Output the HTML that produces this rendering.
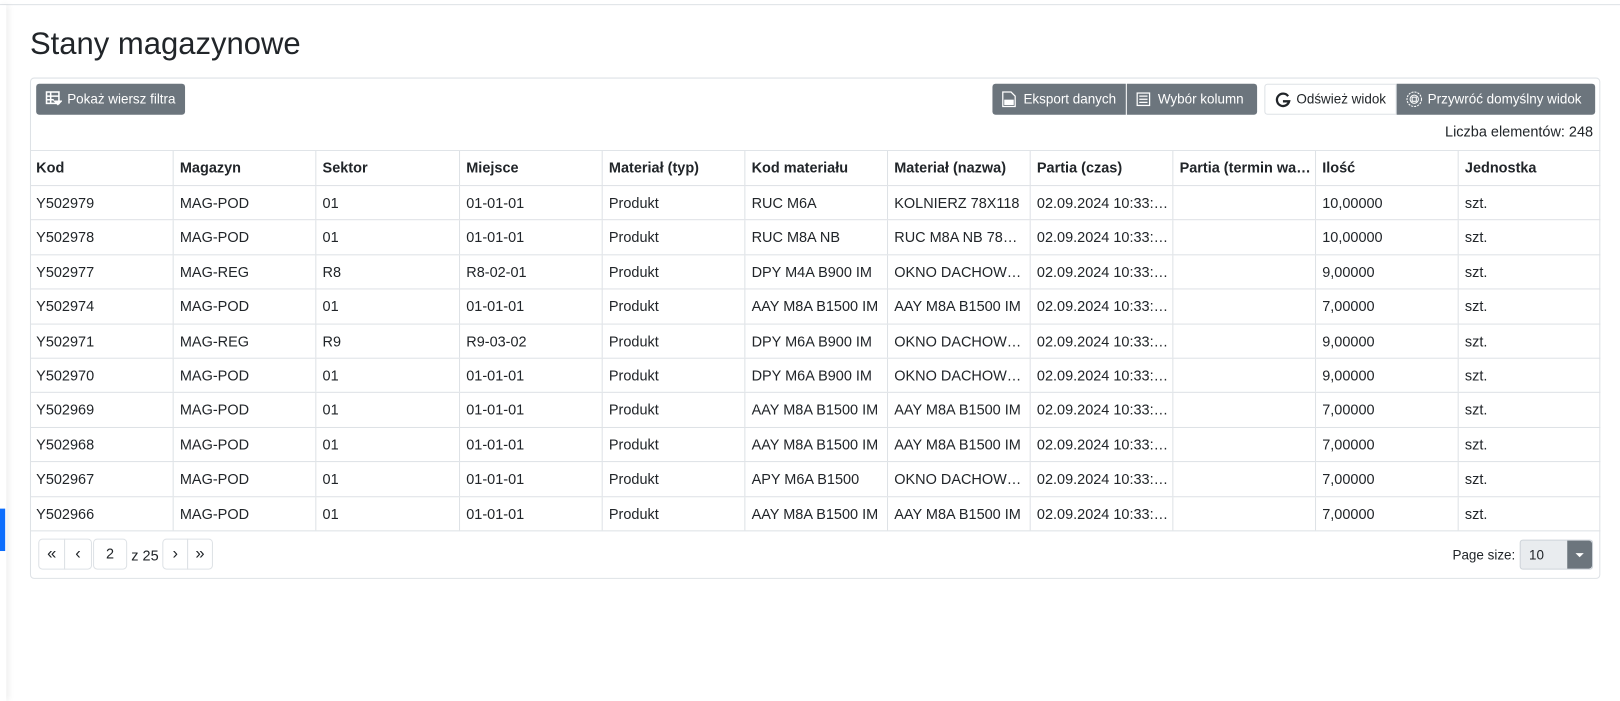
<!DOCTYPE html>
<html><head><meta charset="utf-8"><style>
*{box-sizing:border-box;margin:0;padding:0}
body{width:1620px;height:678px;background:#fff;font-family:"Liberation Sans",sans-serif;color:#212529;position:relative;overflow:hidden;font-size:14px}
#w{position:absolute;left:0;top:0;width:1567px;height:656px;transform:scale(1.0338);transform-origin:0 0}
.top{position:absolute;left:0;top:4px;width:1567px;height:1px;background:#dee2e6}
.side{position:absolute;left:0;top:5px;width:6px;height:673px;background:#fff;box-shadow:2px 0 6px rgba(0,0,0,.08)}
.blue{position:absolute;left:0;top:492px;width:5px;height:41px;background:#0d6efd}
h1{position:absolute;left:29px;top:26px;font-size:30px;font-weight:500}
.card{position:absolute;left:29px;top:75px;width:1519px;height:485px;border:1px solid #dee2e6;border-radius:4px}
.btn{position:absolute;height:30px;top:81px;background:#6c757d;color:#fff;font-size:13px;line-height:30px;padding-left:30px;white-space:nowrap}
.btn svg{position:absolute;left:9px;top:7px}
.cnt{position:absolute;right:26px;top:119px;font-size:14px}
.row{position:absolute;left:29px;width:1519px;border-top:1px solid #dee2e6}
.c{position:absolute;top:0;height:100%;border-left:1px solid #dee2e6;padding-left:6px;white-space:nowrap;overflow:hidden;text-overflow:ellipsis;padding-right:4px}
.hd .c{font-weight:bold}
.pg{position:absolute;top:521px;height:30px;border:1px solid #dee2e6;background:#fff;font-size:16px;text-align:center;line-height:27px}
</style></head><body><div id="w">
<div class="top"></div><div class="side"></div><div class="blue"></div>
<h1>Stany magazynowe</h1>
<div class="card"></div>
<div class="btn" style="left:35px;width:144px;border-radius:3px"><svg width="16" height="16" viewBox="0 0 16 16" fill="none" stroke="#fff" stroke-width="1.5"><rect x="1" y="1" width="12" height="11"/><path d="M1 5h12M1 8.5h7M5 1v11"/><path d="M9 10h6l-3 3z" fill="#fff"/></svg>Pokaż wiersz filtra</div>
<div class="btn" style="left:960px;width:129px;border-radius:3px 0 0 3px"><svg width="14" height="16" viewBox="0 0 14 16" fill="none" stroke="#fff" stroke-width="1.2"><path d="M1 1h8l4 4v10H1z"/><rect x="3" y="9" width="8" height="4" fill="#fff"/></svg>Eksport danych</div>
<div class="btn" style="left:1090px;width:126px;border-radius:0 3px 3px 0"><svg width="14" height="16" viewBox="0 0 14 16" fill="none" stroke="#fff" stroke-width="1.2"><rect x="1" y="2" width="12" height="12"/><path d="M3 5h8M3 8h8M3 11h8"/></svg>Wybór kolumn</div>
<div class="btn" style="left:1223px;width:128px;background:#fff;color:#212529;border:1px solid #dee2e6;border-radius:3px 0 0 3px;line-height:28px"><svg width="16" height="16" viewBox="0 0 16 16" fill="none" stroke="#212529" stroke-width="2.2"><path d="M13 4A6 6 0 1 0 14 9H8"/></svg>Odśwież widok</div>
<div class="btn" style="left:1351px;width:192px;border-radius:0 3px 3px 0"><svg width="16" height="16" viewBox="0 0 16 16" fill="none" stroke="#fff" stroke-width="1"><circle cx="8" cy="8" r="7" stroke-dasharray="2 1"/><circle cx="8" cy="8" r="4"/><rect x="6" y="6" width="4" height="4"/></svg>Przywróć domyślny widok</div>
<div class="cnt">Liczba elementów: 248</div>
<div id="t"></div>
<div class="pg" style="left:37px;width:26px;border-radius:4px 0 0 4px">«</div>
<div class="pg" style="left:62px;width:27px;border-radius:0 4px 4px 0">‹</div>
<div class="pg" style="left:90px;width:33px;border-radius:4px;font-size:14px">2</div>
<div style="position:absolute;left:127px;top:529px;font-size:14px">z 25</div>
<div class="pg" style="left:157px;width:25px;border-radius:4px 0 0 4px">›</div>
<div class="pg" style="left:181px;width:25px;border-radius:0 4px 4px 0">»</div>
<div style="position:absolute;left:1405px;top:529px;font-size:13px">Page size:</div>
<div style="position:absolute;left:1470px;top:522px;width:71px;height:29px;border:1px solid #ced4da;border-radius:3px;background:#e9ecef;font-size:13px;line-height:27px;padding-left:8px">10<div style="position:absolute;right:0;top:0;width:24px;height:27px;background:#6c757d;border-radius:0 3px 3px 0"><div style="position:absolute;left:8px;top:12px;border:4px solid transparent;border-top:4px solid #fff"></div></div></div>
</div>
<script>
var H=["Kod","Magazyn","Sektor","Miejsce","Materiał (typ)","Kod materiału","Materiał (nazwa)","Partia (czas)","Partia (termin ważności)","Ilość","Jednostka"];
var D=[["Y502979","MAG-POD","01","01-01-01","RUC M6A","KOLNIERZ 78X118","10,00000"],
["Y502978","MAG-POD","01","01-01-01","RUC M8A NB","RUC M8A NB 78X118","10,00000"],
["Y502977","MAG-REG","R8","R8-02-01","DPY M4A B900 IM","OKNO DACHOWE DPY","9,00000"],
["Y502974","MAG-POD","01","01-01-01","AAY M8A B1500 IM","AAY M8A B1500 IM","7,00000"],
["Y502971","MAG-REG","R9","R9-03-02","DPY M6A B900 IM","OKNO DACHOWE DPY","9,00000"],
["Y502970","MAG-POD","01","01-01-01","DPY M6A B900 IM","OKNO DACHOWE DPY","9,00000"],
["Y502969","MAG-POD","01","01-01-01","AAY M8A B1500 IM","AAY M8A B1500 IM","7,00000"],
["Y502968","MAG-POD","01","01-01-01","AAY M8A B1500 IM","AAY M8A B1500 IM","7,00000"],
["Y502967","MAG-POD","01","01-01-01","APY M6A B1500","OKNO DACHOWE APY","7,00000"],
["Y502966","MAG-POD","01","01-01-01","AAY M8A B1500 IM","AAY M8A B1500 IM","7,00000"]];
var X=[0,138,276,415,553,691,829,967,1105,1243,1381,1519];
function row(cells,top,h,cls){var s='<div class="row '+cls+'" style="top:'+top+'px;height:'+h+'px;line-height:'+(h-1)+'px">';
for(var i=0;i<11;i++){s+='<div class="c" style="left:'+X[i]+'px;width:'+(X[i+1]-X[i])+'px;'+(i==0?'border-left:0':'')+'">'+cells[i]+'</div>';}
return s+'</div>';}
var o=row(H,145,34,'hd');
for(var r=0;r<10;r++){var d=D[r];var t=Math.round(179+r*33.4);var b=Math.round(179+(r+1)*33.4);
o+=row([d[0],d[1],d[2],d[3],"Produkt",d[4],d[5],"02.09.2024 10:33:15","",d[6],"szt."],t,b-t,'');}
o+='<div class="row" style="top:513px;height:1px"></div>';
document.getElementById('t').innerHTML=o;
</script>
</body></html>
